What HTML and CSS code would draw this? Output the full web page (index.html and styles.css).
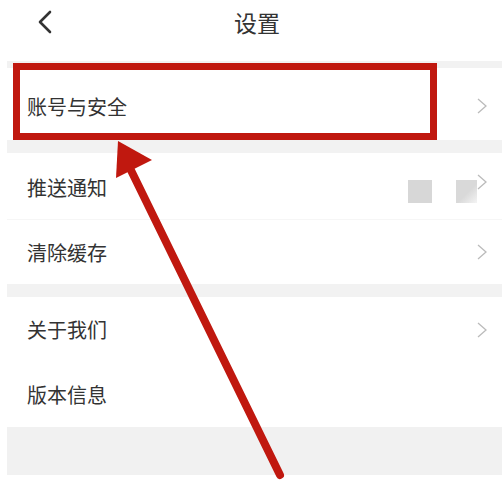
FILE: index.html
```html
<!doctype html>
<html lang="zh-CN">
    <head>
        <meta charset="UTF-8">
        <meta name="viewport" content="width=device-width, initial-scale=1.0">
        <title>设置</title>
        <link rel="stylesheet" href="styles.css">
    </head>
    <body>
        <div class="header">
            <svg class="back" width="16" height="24" viewBox="0 0 16 24">
                <path d="M13 2 L3 12 L13 22" fill="none" stroke="#333" stroke-width="2.6" stroke-linecap="round" stroke-linejoin="round"/>
            </svg>
            <span class="title">设置</span>
        </div>
        <div class="settings">
            <div class="gap gap-top"></div>
            <div class="row row-account">
                <span class="label">账号与安全</span>
                <svg class="chevron" width="10" height="16" viewBox="0 0 10 16"><path d="M1 1 L9 8 L1 15" fill="none" stroke="#bbb" stroke-width="1.3"/></svg>
            </div>
            <div class="gap gap-mid"></div>
            <div class="row row-push">
                <span class="label">推送通知</span>
                <div class="row-right">
                    <div class="mosaic"></div>
                    <div class="mosaic mosaic-fade"></div>
                    <svg class="chevron chevron-up" width="10" height="16" viewBox="0 0 10 16"><path d="M1 1 L9 8 L1 15" fill="none" stroke="#bbb" stroke-width="1.3"/></svg>
                </div>
            </div>
            <div class="row row-cache">
                <span class="label">清除缓存</span>
                <svg class="chevron" width="10" height="16" viewBox="0 0 10 16"><path d="M1 1 L9 8 L1 15" fill="none" stroke="#bbb" stroke-width="1.3"/></svg>
            </div>
            <div class="gap gap-mid"></div>
            <div class="row row-about">
                <span class="label">关于我们</span>
                <svg class="chevron" width="10" height="16" viewBox="0 0 10 16"><path d="M1 1 L9 8 L1 15" fill="none" stroke="#bbb" stroke-width="1.3"/></svg>
            </div>
            <div class="row row-version">
                <span class="label">版本信息</span>
            </div>
            <div class="gap gap-bottom"></div>
        </div>

        <!-- annotation: red frame + arrow -->
        <div class="highlight"></div>
        <svg class="pointer" width="502" height="486" viewBox="0 0 502 486">
            <line x1="124" y1="156" x2="280" y2="475" stroke="#c0180f" stroke-width="8" stroke-linecap="round"/>
            <polygon points="118,141 152,160 116,178" fill="#c0180f"/>
        </svg>
    </body>
</html>
```

FILE: styles.css
```css
* {
    box-sizing: border-box;
}
html {
    font-family: "Noto Sans CJK SC", "Noto Sans", sans-serif;
    color: #333;
    background-color: #fff;
}
body {
    margin: 0;
    width: 502px;
    height: 486px;
    overflow: hidden;
    position: relative;
}
.header {
    height: 61px;
    display: flex;
    align-items: center;
    justify-content: center;
    position: relative;
}
.back {
    position: absolute;
    left: 37px;
    top: 10px;
}
.title {
    font-size: 23px;
    margin-top: -18px;
    margin-left: 12px;
    color: #333;
}
.settings {
    margin-left: 7px;
}
.gap {
    background-color: #f2f2f2;
}
.gap-top {
    height: 7px;
}
.gap-mid {
    height: 13px;
}
.gap-bottom {
    height: 48px;
    background-color: #f1f1f1;
}
.row {
    display: flex;
    align-items: center;
    justify-content: space-between;
    padding: 0 15px 0 20px;
    background-color: #fff;
}
.label {
    font-size: 20px;
    color: #333;
}
.row-account {
    height: 72px;
    padding-top: 4px;
}
.row-push {
    height: 67px;
    border-bottom: 1px solid #f6f6f6;
    padding-top: 2px;
}
.row-cache {
    height: 64px;
}
.row-about {
    height: 65px;
}
.row-version {
    height: 65px;
}
.row-right {
    display: flex;
    align-items: center;
    gap: 24px;
}
.mosaic {
    width: 24px;
    height: 23px;
    background-color: #d7d7d7;
    margin-top: 9px;
}
.mosaic-fade {
    width: 21px;
    margin-right: -24px;
    background: linear-gradient(135deg, #d9d9d9 55%, #f4f4f4 100%);
}
.chevron-up {
    margin-top: -10px;
}
.highlight {
    position: absolute;
    left: 13px;
    top: 63px;
    width: 424px;
    height: 77px;
    border: 7px solid #c0180f;
}
.pointer {
    position: absolute;
    left: 0;
    top: 0;
}
```
